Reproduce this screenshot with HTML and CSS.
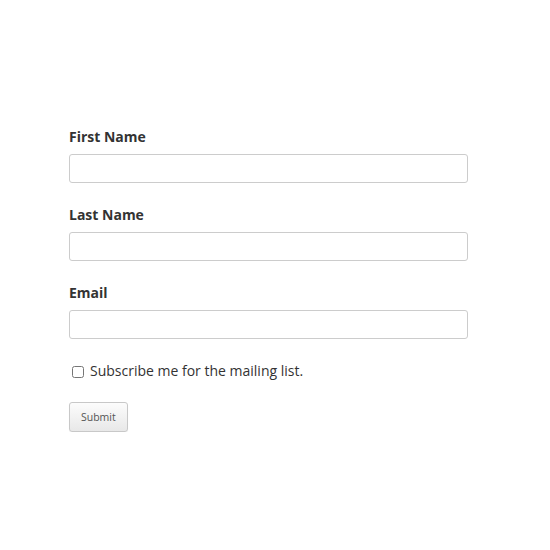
FILE: index.html
```html
<!DOCTYPE html>
<html>
<head>
<meta charset="utf-8">
<link rel="stylesheet" href="styles.css">
</head>
<body>
<form class="form">
  <div class="field">
    <label class="label" for="fn">First Name</label>
    <input class="input" id="fn" type="text">
  </div>
  <div class="field">
    <label class="label" for="ln">Last Name</label>
    <input class="input" id="ln" type="text">
  </div>
  <div class="field">
    <label class="label" for="em">Email</label>
    <input class="input" id="em" type="text">
  </div>
  <label class="check">
    <input class="checkbox" type="checkbox">
    <span>Subscribe me for the mailing list.</span>
  </label>
  <button class="submit" type="button">Submit</button>
</form>
</body>
</html>
```
FILE: styles.css
```css
html, body {
  margin: 0;
  padding: 0;
  background: #fff;
}
body {
  font-family: "Open Sans", "DejaVu Sans", sans-serif;
  color: #333;
}
.form {
  padding: 127px 0 0 69px;
  width: 399px;
  display: flex;
  flex-direction: column;
  align-items: flex-start;
}
.field {
  display: flex;
  flex-direction: column;
  width: 100%;
  margin-bottom: 22px;
}
.label {
  font-size: 14px;
  font-weight: 700;
  line-height: 20px;
  color: #333;
  margin-bottom: 7px;
}
.input {
  box-sizing: border-box;
  width: 399px;
  height: 29px;
  margin: 0;
  border: 1px solid #ccc;
  border-radius: 3px;
  background: #fff;
  font: inherit;
  font-size: 14px;
  padding: 4px 8px;
}
.check {
  display: flex;
  align-items: center;
  font-size: 14px;
  line-height: 20px;
  color: #333;
  margin-top: 0;
}
.checkbox {
  width: 12px;
  height: 12px;
  margin: 1px 6px 0 3px;
}
.submit {
  margin-top: 21px;
  height: 30px;
  padding: 0 11px;
  border: 1px solid #c8c8c8;
  border-radius: 3px;
  background: linear-gradient(#fcfcfc, #e8e8e8);
  font-family: "Open Sans", sans-serif;
  font-size: 10.5px;
  color: #555;
  box-shadow: 0 1px 1px rgba(0,0,0,0.06);
}
```
